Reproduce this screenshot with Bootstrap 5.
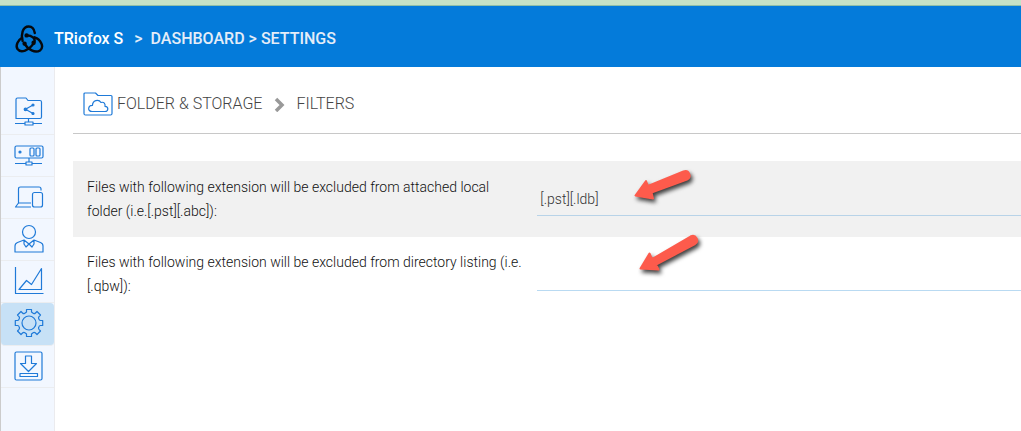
<!DOCTYPE html>
<html lang="en">
<head>
<meta charset="utf-8">
<meta name="viewport" content="width=device-width, initial-scale=1">
<title>Settings - Filters</title>
<link rel="stylesheet" href="https://cdn.jsdelivr.net/npm/bootstrap@5.3.0/dist/css/bootstrap.min.css">
<style>
  body { font-family: Roboto, "Liberation Sans", sans-serif; font-size: 14px; color: #111; background: #fff; }
  svg { display: block; }
  .top-strip { height: 6px; background: #c6e2c6; border-bottom: 1px solid #8fbfa8; }
  .app-bar { height: 61px; background: #047bda; font-size: 16px; font-weight: 500; line-height: 24px; padding: 4px 0 0 14px; }
  .app-bar a, .app-bar span { color: #e4edf8; text-decoration: none; white-space: pre; }
  .app-bar .brand-name { color: #fff; margin-left: 10px; margin-right: 3px; }
  .side-bar { width: 55px; flex: none; background: #f2f7ff; border-left: 1px solid #ccc; border-right: 1px solid #ebebee; padding-top: 25px; }
  .side-bar a { display: flex; align-items: center; justify-content: center; height: 42px; padding: 0 0 2px 2px; border-bottom: 1px solid #ebedf0; }
  .side-bar a:first-child { height: 43px; padding-bottom: 4px; }
  .side-bar a.active { height: 43px; background: #c7e1f6; border-radius: 4px; }
  .line-icon { fill: none; stroke: #1f7ad8; stroke-width: 1.2; stroke-linejoin: round; }
  .main-pane { padding-left: 18px; min-width: 0; }
  .page-title { height: 67px; border-bottom: 1px solid #c8c8c8; padding: 8px 0 0 10px; font-size: 16px; font-weight: 300; line-height: 24px; }
  .page-title a, .page-title span { color: #444; text-decoration: none; }
  .filter-form { margin-top: 27px; }
  .filter-row { padding: 13px 0 14px 14px; font-weight: 300; line-height: 24px; }
  .filter-row label { width: calc(48% + 2px); flex: none; padding-right: 12px; }
  .filter-row.shaded { padding-top: 14px; background: #f1f1f1; }
  .filter-input { height: 34px; margin-top: 7px; border: 0; border-bottom: 1px solid #b9daf2; border-radius: 0; background: transparent; padding: 0 3px; font-size: 14px; font-weight: 300; color: #333; }
  .shaded .filter-input { border-bottom-color: #b8d3e8; }
  .pointer { position: absolute; left: 93px; top: -10px; pointer-events: none; filter: drop-shadow(2px 3px 2px rgba(0,0,0,.75)); fill: #fd5b4c; stroke: #fd5b4c; stroke-width: 2; stroke-linejoin: round; }
  .pointer-high { top: -20px; }
</style>
</head>
<body class="min-vh-100 d-flex flex-column">
<div class="top-strip"></div>
<header class="app-bar d-flex align-items-center">
  <svg width="30" height="30" viewBox="0 0 30 30" fill="none" stroke="#06090d" stroke-width="2.4" stroke-linecap="round" aria-hidden="true">
    <path d="M12.600 11.400C17 11.200 22.800 14.400 19.800 19.200"/>
    <path d="M8.600 17C6.700 11 8.500 2.500 14.700 2.500C18.500 2.500 20.300 6 20.800 9"/>
    <path d="M8 13.800C4.500 16 1 21 3.500 25C6.800 29.500 15 26.500 19.800 19.200"/>
    <path d="M10.600 20C14 25.500 21 29.500 26 26.500C30.500 23 27 15.500 20.600 13.300"/>
    <circle cx="12.600" cy="11.400" r="1"/><circle cx="19.600" cy="18.800" r="1"/><circle cx="10.600" cy="19.600" r="1"/>
  </svg>
  <a class="brand-name" href="#">TRiofox S</a>
  <span class="ms-2 me-1">&gt;</span><a href="#" class="ms-1">DASHBOARD</a>
  <span class="ms-1">&gt;</span><a href="#" class="ms-1">SETTINGS</a>
</header>
<div class="d-flex flex-grow-1">
  <nav class="side-bar" aria-label="Sections">
    <a href="#" aria-label="Shared folders"><svg class="line-icon" width="30" height="30" viewBox="0 0 30 30">
      <path d="M2 22.500V3.500Q2 2 3.500 2H12L14 4.500H26Q27.500 4.500 27.500 6V21Q27.500 22.500 26 22.500H2ZM14.500 22.500V26M1 27.500H11M19 27.500H28M11 26H19V29H11Z"/><path d="M19 9L11.500 13.300L19 17.500"/><g fill="#2a7fd6"><circle cx="19" cy="9" r="1"/><circle cx="11.500" cy="13.300" r="1.300"/><circle cx="19" cy="17.500" r="1"/></g></svg></a>
    <a href="#" aria-label="Servers"><svg class="line-icon" width="30" height="24" viewBox="0 0 30 24">
      <rect x="1" y="3" width="28" height="12" rx="1.500"/><circle cx="6" cy="9" r="1" fill="#2a7fd6"/><rect x="16" y="5" width="4" height="8" rx="1"/><rect x="22" y="5" width="4" height="8" rx="1"/><path d="M15 15V19M1 20.500H12M18 20.500H28M12 19H18V22H12Z"/></svg></a>
    <a href="#" aria-label="Devices"><svg class="line-icon" width="30" height="24" viewBox="0 0 30 24">
      <path d="M4.500 18V4Q4.500 2 6.500 2H25Q27 2 27 4V5.500M4.500 18L1.500 22H17M4.500 18H17"/><rect x="18.500" y="7.500" width="10" height="14.500" rx="2"/></svg></a>
    <a href="#" aria-label="Users"><svg class="line-icon" width="30" height="30" viewBox="0 0 30 30">
      <circle cx="15" cy="8" r="6.500"/><path d="M10 16L3.500 18.500Q1 19.500 1 22V28H29V22Q29 19.500 26.500 18.500L20 16L15 20L10 16V20L12 23L15 20L18 23L20 20V16"/></svg></a>
    <a href="#" aria-label="Reports"><svg class="line-icon" width="30" height="30" viewBox="0 0 30 30">
      <path d="M1.500 1V27.500H29.500M5 23.500H27.500V2.500L17.500 18.500L12.500 14.500Z"/></svg></a>
    <a href="#" class="active" aria-label="Settings" aria-current="page"><svg class="line-icon" width="30" height="30" viewBox="0 0 30 30">
      <circle cx="15" cy="15" r="7"/><path d="M12.500 1.500V4L10.500 5.500Q9.500 6 8.500 5L7 3.500L3.500 7L5 8.700Q5.800 9.700 5.300 10.700Q4.800 12.500 3.500 12.500H1.300V17.500H3.500Q4.800 17.500 5.300 19.300Q5.800 20.300 5 21.300L3.500 23L7 26.500L8.500 25Q9.500 24 10.500 24.500L12.500 26V28.500H17.500V26L19.500 24.500Q20.500 24 21.500 25L23 26.500L26.500 23L25 21.300Q24.200 20.300 24.700 19.300Q25.200 17.500 26.500 17.500H28.700V12.500H26.500Q25.200 12.500 24.700 10.700Q24.200 9.700 25 8.700L26.500 7L23 3.500L21.500 5Q20.500 6 19.500 5.500L17.500 4V1.500Z"/></svg></a>
    <a href="#" aria-label="Downloads"><svg class="line-icon" width="30" height="30" viewBox="0 0 30 30">
      <rect x="1" y="1" width="27" height="28" rx="1.500"/><path d="M11.500 5H17.500V12.500H22.500L14.500 20.500L6.500 12.500H11.500ZM6 22.500H23.500V25.500H6Z"/></svg></a>
  </nav>
  <main class="main-pane flex-grow-1">
    <nav class="page-title d-flex align-items-center" aria-label="Breadcrumb">
      <svg class="line-icon" width="30" height="24" viewBox="0 0 30 24" aria-hidden="true">
        <path d="M1 21.500V2Q1 1 2 1H12.500L15 3.500H28Q29 3.500 29 4.500V21.500Q29 23 27.500 23H2.500Q1 23 1 21.500Z"/><path d="M9 19.500C4 19.500 5 13 9.500 13.300C9.500 8.500 15.500 6.500 18 10.500C21 9.500 22.500 12 22 14.300C26 14.500 25.500 19.500 22 19.500Z"/></svg>
      <a href="#" class="ms-1">FOLDER &amp; STORAGE</a>
      <svg class="mx-2" width="18" height="16" viewBox="0 0 18 16" fill="none" stroke="#999" stroke-width="3.500" aria-hidden="true"><path d="M6 3L12 9L6 15"/></svg>
      <span>FILTERS</span>
    </nav>
    <form class="filter-form">
      <div class="filter-row shaded d-flex">
        <label for="localExt">Files with following extension will be excluded from attached local folder (i.e.[.pst][.abc]):</label>
        <div class="position-relative flex-grow-1">
          <input id="localExt" type="text" class="filter-input w-100" value="[.pst][.ldb]">
          <svg class="pointer" width="70" height="40" viewBox="630 165 70 40" aria-hidden="true"><path d="M635.500 195.500L646 181L648 186L683.500 171.500C689 169.500 692 177 687 179.500L651.500 192.500L653 198.500Z"/></svg>
        </div>
      </div>
      <div class="filter-row d-flex">
        <label for="listExt">Files with following extension will be excluded from directory listing (i.e.<wbr>[.qbw]):</label>
        <div class="position-relative flex-grow-1">
          <input id="listExt" type="text" class="filter-input w-100">
          <svg class="pointer pointer-high" width="75" height="46" viewBox="630 230 75 46" aria-hidden="true"><path d="M640.500 268.500L649.500 253.500L652 259L690.500 236.500C696 234 699.500 241 695 244L656 264.500L658.500 269.500Z"/></svg>
        </div>
      </div>
    </form>
  </main>
</div>
<script src="https://cdn.jsdelivr.net/npm/bootstrap@5.3.0/dist/js/bootstrap.bundle.min.js"></script>
</body>
</html>
